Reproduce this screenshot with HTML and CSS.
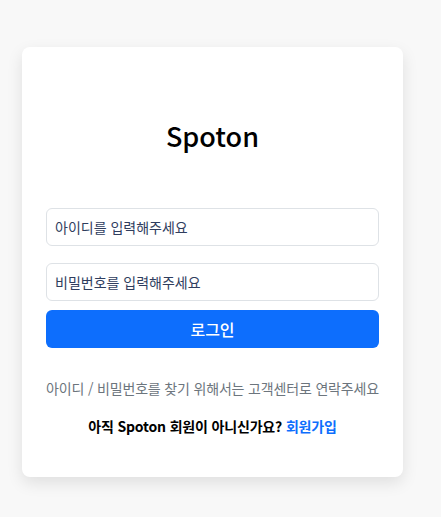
FILE: index.html
```html
<!DOCTYPE html>
<html lang="ko">
<head>
<meta charset="utf-8">
<link rel="stylesheet" href="styles.css">
</head>
<body>
<div class="card">
  <h1 class="title">Spoton</h1>
  <form class="form">
    <input class="field field-id" type="text" placeholder="아이디를 입력해주세요">
    <input class="field field-pw" type="password" placeholder="비밀번호를 입력해주세요">
    <button class="btn" type="button">로그인</button>
  </form>
  <p class="help">아이디 / 비밀번호를 찾기 위해서는 고객센터로 연락주세요</p>
  <p class="signup">아직 Spoton 회원이 아니신가요? <a class="link" href="#">회원가입</a></p>
</div>
</body>
</html>
```
FILE: styles.css
```css
html, body {
  margin: 0;
  padding: 0;
}
body {
  background: #f8f8f8;
  font-family: "Noto Sans CJK KR", "Noto Sans", sans-serif;
  padding: 47px 0 0 22px;
  height: 517px;
  box-sizing: border-box;
}
.card {
  width: 381px;
  height: 430px;
  box-sizing: border-box;
  background: #fff;
  border-radius: 8px;
  box-shadow: 0 6px 16px rgba(0, 0, 0, 0.1);
  padding: 72px 24px 0;
  display: flex;
  flex-direction: column;
}
.title {
  margin: 0;
  font-size: 27px;
  font-weight: 500;
  line-height: 34px;
  text-align: center;
  color: #000;
}
.form {
  margin-top: 55px;
  display: flex;
  flex-direction: column;
}
.field {
  height: 38px;
  box-sizing: border-box;
  border: 1px solid #dee2e6;
  border-radius: 6px;
  padding: 0 8px;
  font-family: inherit;
  font-size: 14px;
  color: #212529;
  outline: none;
}
.field::placeholder {
  color: #2f3d5e;
}
.field-pw {
  margin-top: 17px;
}
.btn {
  margin-top: 9px;
  height: 38px;
  border: none;
  border-radius: 6px;
  background: #0d6efd;
  color: #fff;
  font-family: inherit;
  font-size: 16px;
  font-weight: 500;
}
.help {
  margin: 30px 0 0;
  font-size: 14px;
  line-height: 21px;
  letter-spacing: -0.17px;
  color: #6c757d;
  text-align: center;
  white-space: nowrap;
}
.signup {
  margin: 17px 0 0;
  font-size: 14px;
  line-height: 21px;
  letter-spacing: -0.17px;
  font-weight: 700;
  color: #000;
  text-align: center;
}
.link {
  color: #0d6efd;
  text-decoration: none;
}
```
